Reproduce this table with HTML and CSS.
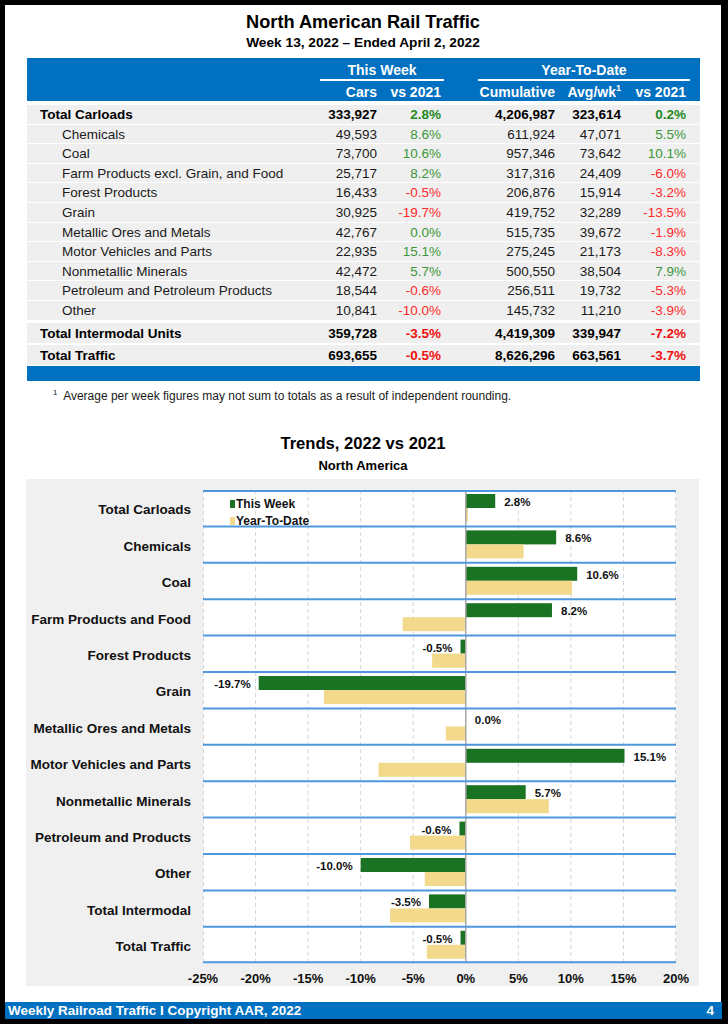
FILE: index.html
```html
<!DOCTYPE html>
<html lang="en">
<head>
<meta charset="utf-8">
<title>North American Rail Traffic</title>
<link rel="stylesheet" href="styles.css">
</head>
<body>
<div class="page">
  <h1 class="title narrow">North American Rail Traffic</h1>
  <div class="subtitle narrow">Week 13, 2022 – Ended April 2, 2022</div>

  <div class="table">
    <div class="thead narrow">
      <div class="thead-row r1">
        <div></div>
        <div class="grp g1">This Week</div>
        <div></div>
        <div class="grp g2">Year-To-Date</div>
      </div>
      <div class="thead-row r2">
        <div></div>
        <div class="c2">Cars</div>
        <div class="c3">vs 2021</div>
        <div class="c5">Cumulative</div>
        <div class="c6">Avg/wk<sup>1</sup></div>
        <div class="c7">vs 2021</div>
      </div>
    </div>

    <div class="tbody">
      <div class="row total"><div class="lbl">Total Carloads</div><div class="c2">333,927</div><div class="c3 pos">2.8%</div><div class="c5">4,206,987</div><div class="c6">323,614</div><div class="c7 pos">0.2%</div></div>
      <div class="row"><div class="lbl sub">Chemicals</div><div class="c2">49,593</div><div class="c3 pos">8.6%</div><div class="c5">611,924</div><div class="c6">47,071</div><div class="c7 pos">5.5%</div></div>
      <div class="row"><div class="lbl sub">Coal</div><div class="c2">73,700</div><div class="c3 pos">10.6%</div><div class="c5">957,346</div><div class="c6">73,642</div><div class="c7 pos">10.1%</div></div>
      <div class="row"><div class="lbl sub">Farm Products excl. Grain, and Food</div><div class="c2">25,717</div><div class="c3 pos">8.2%</div><div class="c5">317,316</div><div class="c6">24,409</div><div class="c7 neg">-6.0%</div></div>
      <div class="row"><div class="lbl sub">Forest Products</div><div class="c2">16,433</div><div class="c3 neg">-0.5%</div><div class="c5">206,876</div><div class="c6">15,914</div><div class="c7 neg">-3.2%</div></div>
      <div class="row"><div class="lbl sub">Grain</div><div class="c2">30,925</div><div class="c3 neg">-19.7%</div><div class="c5">419,752</div><div class="c6">32,289</div><div class="c7 neg">-13.5%</div></div>
      <div class="row"><div class="lbl sub">Metallic Ores and Metals</div><div class="c2">42,767</div><div class="c3 pos">0.0%</div><div class="c5">515,735</div><div class="c6">39,672</div><div class="c7 neg">-1.9%</div></div>
      <div class="row"><div class="lbl sub">Motor Vehicles and Parts</div><div class="c2">22,935</div><div class="c3 pos">15.1%</div><div class="c5">275,245</div><div class="c6">21,173</div><div class="c7 neg">-8.3%</div></div>
      <div class="row"><div class="lbl sub">Nonmetallic Minerals</div><div class="c2">42,472</div><div class="c3 pos">5.7%</div><div class="c5">500,550</div><div class="c6">38,504</div><div class="c7 pos">7.9%</div></div>
      <div class="row"><div class="lbl sub">Petroleum and Petroleum Products</div><div class="c2">18,544</div><div class="c3 neg">-0.6%</div><div class="c5">256,511</div><div class="c6">19,732</div><div class="c7 neg">-5.3%</div></div>
      <div class="row"><div class="lbl sub">Other</div><div class="c2">10,841</div><div class="c3 neg">-10.0%</div><div class="c5">145,732</div><div class="c6">11,210</div><div class="c7 neg">-3.9%</div></div>
      <div class="row total big first-big"><div class="lbl">Total Intermodal Units</div><div class="c2">359,728</div><div class="c3 neg">-3.5%</div><div class="c5">4,419,309</div><div class="c6">339,947</div><div class="c7 neg">-7.2%</div></div>
      <div class="row total big"><div class="lbl">Total Traffic</div><div class="c2">693,655</div><div class="c3 neg">-0.5%</div><div class="c5">8,626,296</div><div class="c6">663,561</div><div class="c7 neg">-3.7%</div></div>
    </div>
    <div class="tfoot"></div>
  </div>

  <p class="footnote"><sup>1</sup> Average per week figures may not sum to totals as a result of independent rounding.</p>

  <h2 class="chart-title narrow">Trends, 2022 vs 2021</h2>
  <div class="chart-sub narrow">North America</div>

  <div class="chart">
    <div class="cats narrow">
      <div class="cat">Total Carloads</div>
      <div class="cat">Chemicals</div>
      <div class="cat">Coal</div>
      <div class="cat">Farm Products and Food</div>
      <div class="cat">Forest Products</div>
      <div class="cat">Grain</div>
      <div class="cat">Metallic Ores and Metals</div>
      <div class="cat">Motor Vehicles and Parts</div>
      <div class="cat">Nonmetallic Minerals</div>
      <div class="cat">Petroleum and Products</div>
      <div class="cat">Other</div>
      <div class="cat">Total Intermodal</div>
      <div class="cat">Total Traffic</div>
    </div>
    <svg class="plot" width="473" height="496" viewBox="0 0 473 496">
      <rect x="0" y="0" width="473" height="473.2" fill="#ffffff"/>
      <g class="vgrid">
        <line x1="52.56" y1="0" x2="52.56" y2="473.2"/>
        <line x1="105.11" y1="0" x2="105.11" y2="473.2"/>
        <line x1="157.67" y1="0" x2="157.67" y2="473.2"/>
        <line x1="210.22" y1="0" x2="210.22" y2="473.2"/>
        <line x1="315.33" y1="0" x2="315.33" y2="473.2"/>
        <line x1="367.89" y1="0" x2="367.89" y2="473.2"/>
        <line x1="420.44" y1="0" x2="420.44" y2="473.2"/>
        <line x1="472.5" y1="0" x2="472.5" y2="473.2"/>
        <line x1="0.5" y1="0" x2="0.5" y2="473.2"/>
      </g>
      <g class="green">
        <rect x="262.78" y="4" width="29.43" height="14"/>
        <rect x="262.78" y="40.4" width="90.39" height="14"/>
        <rect x="262.78" y="76.8" width="111.42" height="14"/>
        <rect x="262.78" y="113.2" width="86.19" height="14"/>
        <rect x="257.52" y="149.6" width="5.26" height="14"/>
        <rect x="55.71" y="186" width="207.07" height="14"/>
        <rect x="262.78" y="258.8" width="158.72" height="14"/>
        <rect x="262.78" y="295.2" width="59.91" height="14"/>
        <rect x="256.47" y="331.6" width="6.31" height="14"/>
        <rect x="157.67" y="368" width="105.11" height="14"/>
        <rect x="225.99" y="404.4" width="36.79" height="14"/>
        <rect x="257.52" y="440.8" width="5.26" height="14"/>
      </g>
      <g class="yellow">
        <rect x="262.78" y="18" width="2.1" height="14"/>
        <rect x="262.78" y="54.4" width="57.81" height="14"/>
        <rect x="262.78" y="90.8" width="106.16" height="14"/>
        <rect x="199.71" y="127.2" width="63.07" height="14"/>
        <rect x="229.14" y="163.6" width="33.64" height="14"/>
        <rect x="120.88" y="200" width="141.9" height="14"/>
        <rect x="242.81" y="236.4" width="19.97" height="14"/>
        <rect x="175.54" y="272.8" width="87.24" height="14"/>
        <rect x="262.78" y="309.2" width="83.04" height="14"/>
        <rect x="207.07" y="345.6" width="55.71" height="14"/>
        <rect x="221.79" y="382" width="40.99" height="14"/>
        <rect x="187.1" y="418.4" width="75.68" height="14"/>
        <rect x="223.89" y="454.8" width="38.89" height="14"/>
      </g>
      <line class="zero" x1="262.78" y1="0" x2="262.78" y2="473.2"/>
      <g class="hgrid">
        <line x1="0" y1="1" x2="473" y2="1"/>
        <line x1="0" y1="36.4" x2="473" y2="36.4"/>
        <line x1="0" y1="72.8" x2="473" y2="72.8"/>
        <line x1="0" y1="109.2" x2="473" y2="109.2"/>
        <line x1="0" y1="145.6" x2="473" y2="145.6"/>
        <line x1="0" y1="182" x2="473" y2="182"/>
        <line x1="0" y1="218.4" x2="473" y2="218.4"/>
        <line x1="0" y1="254.8" x2="473" y2="254.8"/>
        <line x1="0" y1="291.2" x2="473" y2="291.2"/>
        <line x1="0" y1="327.6" x2="473" y2="327.6"/>
        <line x1="0" y1="364" x2="473" y2="364"/>
        <line x1="0" y1="400.4" x2="473" y2="400.4"/>
        <line x1="0" y1="436.8" x2="473" y2="436.8"/>
        <line x1="0" y1="472.2" x2="473" y2="472.2"/>
      </g>
      <g class="vals">
        <text x="301.2" y="16">2.8%</text>
        <text x="362.2" y="52.4">8.6%</text>
        <text x="383.2" y="88.8">10.6%</text>
        <text x="358" y="125.2">8.2%</text>
        <text x="249.5" y="161.6" text-anchor="end">-0.5%</text>
        <text x="47.7" y="198" text-anchor="end">-19.7%</text>
        <text x="271.8" y="234.4">0.0%</text>
        <text x="430.5" y="270.8">15.1%</text>
        <text x="331.7" y="307.2">5.7%</text>
        <text x="248.5" y="343.6" text-anchor="end">-0.6%</text>
        <text x="149.7" y="380" text-anchor="end">-10.0%</text>
        <text x="218" y="416.4" text-anchor="end">-3.5%</text>
        <text x="249.5" y="452.8" text-anchor="end">-0.5%</text>
      </g>
      <g class="legend">
        <rect x="27" y="10" width="5" height="8" fill="#1a7322"/>
        <text x="33" y="18">This Week</text>
        <rect x="27" y="27" width="5" height="8" fill="#f2d98b"/>
        <text x="33" y="35">Year-To-Date</text>
      </g>
      <g class="axis">
        <text x="0" y="493">-25%</text>
        <text x="52.56" y="493">-20%</text>
        <text x="105.11" y="493">-15%</text>
        <text x="157.67" y="493">-10%</text>
        <text x="210.22" y="493">-5%</text>
        <text x="262.78" y="493">0%</text>
        <text x="315.33" y="493">5%</text>
        <text x="367.89" y="493">10%</text>
        <text x="420.44" y="493">15%</text>
        <text x="473" y="493">20%</text>
      </g>
    </svg>
  </div>
</div>
<div class="footer narrow">
  <span>Weekly Railroad Traffic I Copyright AAR, 2022</span>
  <span>4</span>
</div>
</body>
</html>
```

FILE: styles.css
```css
body {
  margin: 0;
  background: #000;
  font-family: "Liberation Sans", Arial, sans-serif;
  color: #1a1a1a;
}

.narrow {
  font-family: "Liberation Sans Narrow", "Arial Narrow", "Liberation Sans", sans-serif;
}

.page {
  width: 716px;
  height: 997px;
  margin: 5px 0 0 5px;
  padding-top: 6px;
  box-sizing: border-box;
  background: #fff;
  overflow: hidden;
}

.title {
  margin: 0;
  text-align: center;
  font-size: 18.2px;
  line-height: 23px;
  font-weight: bold;
  color: #000;
}

.subtitle {
  text-align: center;
  font-size: 13.7px;
  line-height: 18px;
  font-weight: bold;
  color: #000;
}

.table {
  margin: 6px 0 0 22px;
  width: 673px;
}

.thead {
  background: #0070c0;
  color: #fff;
  font-weight: bold;
  font-size: 14px;
  height: 43px;
}

.thead-row,
.row {
  display: grid;
  grid-template-columns: 293px 57px 64px 36px 78px 66px 65px 14px;
}

.r1 {
  height: 23px;
}

.grp {
  text-align: center;
  padding-top: 3px;
  line-height: 18px;
  height: 18px;
  border-bottom: 2px solid #fff;
}

.g1 {
  grid-column: 2 / 4;
  margin-right: -3px;
}

.g2 {
  grid-column: 5 / 8;
  margin-left: 1px;
  margin-right: -4px;
}

.r2 {
  height: 20px;
  box-sizing: border-box;
  padding-top: 2px;
  line-height: 18px;
}

.r2 div {
  text-align: right;
  white-space: nowrap;
}

.r2 sup {
  font-size: 9px;
  line-height: 0;
}

.c2 { grid-column: 2; text-align: right; }
.c3 { grid-column: 3; text-align: right; }
.c5 { grid-column: 5; text-align: right; }
.c6 { grid-column: 6; text-align: right; }
.c7 { grid-column: 7; text-align: right; }

.tbody {
  margin-top: 4px;
}

.row {
  box-sizing: border-box;
  height: 18.6px;
  padding-top: 1px;
  line-height: 17.6px;
  margin-bottom: 1px;
  background: #efefef;
  font-size: 13.5px;
  white-space: nowrap;
}

.lbl {
  grid-column: 1;
  padding-left: 13px;
}

.lbl.sub {
  padding-left: 35px;
}

.row.total {
  font-weight: bold;
  color: #000;
}

.row.big {
  height: 20px;
  line-height: 19px;
  margin-bottom: 2.5px;
}

.row.first-big {
  margin-top: 3.4px;
}

.pos {
  color: #3a973a;
}

.neg {
  color: #ff2a2a;
}

.row.total .pos {
  color: #1f8a24;
}

.row.total .neg {
  color: #f01010;
}

.tfoot {
  height: 15px;
  margin-top: -1.5px;
  background: #0070c0;
}

.footnote {
  margin: 7px 0 0 48px;
  font-size: 12px;
  line-height: 16px;
  color: #1a1a1a;
}

.footnote sup {
  font-size: 8px;
  line-height: 0;
  margin-right: 3px;
}

.chart-title {
  margin: 29px 0 0;
  text-align: center;
  font-size: 16.6px;
  line-height: 22px;
  font-weight: bold;
  color: #000;
}

.chart-sub {
  margin-top: 3px;
  text-align: center;
  font-size: 13px;
  line-height: 16px;
  font-weight: bold;
  color: #000;
}

.chart {
  margin: 5px 0 0 21px;
  width: 673px;
  height: 507px;
  box-sizing: border-box;
  padding-top: 11px;
  background: #f0f0f0;
  display: grid;
  grid-template-columns: 177px 473px;
  align-items: start;
}

.cats {
  display: flex;
  flex-direction: column;
}

.cat {
  box-sizing: border-box;
  height: 36.4px;
  padding-top: 3px;
  line-height: 33.4px;
  text-align: right;
  padding-right: 12px;
  font-size: 13.5px;
  font-weight: bold;
  color: #111;
  white-space: nowrap;
}

.plot {
  display: block;
  overflow: visible;
}

.vgrid line {
  stroke: #d6d6d6;
  stroke-width: 1;
  stroke-dasharray: 4 3;
}

.zero {
  stroke: #a8a8a8;
  stroke-width: 1.5;
}

.hgrid line {
  stroke: #4f97dc;
  stroke-width: 2;
}

.green rect {
  fill: #1a7322;
}

.yellow rect {
  fill: #f2d98b;
}

.vals text,
.legend text,
.axis text {
  font-family: "Liberation Sans Narrow", "Arial Narrow", "Liberation Sans", sans-serif;
  font-weight: bold;
  fill: #111;
}

.vals text {
  font-size: 11.5px;
}

.legend text {
  font-size: 12px;
}

.axis text {
  font-size: 13px;
  text-anchor: middle;
}

.footer {
  width: 717px;
  height: 17px;
  margin-left: 5px;
  box-sizing: border-box;
  padding: 0 8px 0 3px;
  background: #0070c0;
  color: #fff;
  font-size: 13.5px;
  font-weight: bold;
  line-height: 17px;
  display: flex;
  justify-content: space-between;
}
```
